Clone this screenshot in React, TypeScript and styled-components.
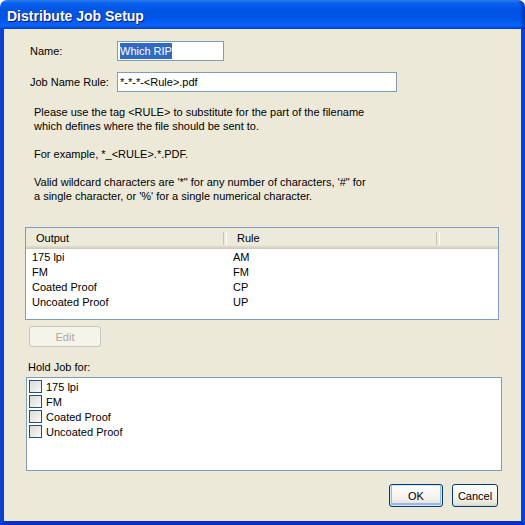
import React from 'react';
import styled, { createGlobalStyle, css } from 'styled-components';

const GlobalStyle = createGlobalStyle`
  html, body {
    margin: 0;
    padding: 0;
    background: #ffffff;
  }
  * {
    box-sizing: border-box;
  }
`;

const Window = styled.div`
  width: 525px;
  height: 525px;
  display: flex;
  flex-direction: column;
  font-family: 'Liberation Sans', Arial, sans-serif;
  font-size: 11px;
  color: #000;
`;

const TitleBar = styled.div`
  height: 29px;
  flex: none;
  display: flex;
  align-items: center;
  padding-left: 7px;
  padding-top: 2px;
  border-radius: 7px 7px 0 0;
  background: linear-gradient(
    to bottom,
    #3d95ff 0%,
    #0a62f0 10%,
    #0054e3 35%,
    #0055e8 65%,
    #0665ff 88%,
    #0049d8 100%
  );
  box-shadow: inset -3px 0 3px rgba(0, 20, 150, 0.5);
`;

const Title = styled.div`
  color: #fff;
  font-family: 'Liberation Sans', Arial, sans-serif;
  font-weight: bold;
  font-size: 14px;
  text-shadow: 1px 1px 0 #0a1883;
`;

const Body = styled.div`
  flex: 1;
  display: flex;
  flex-direction: column;
  background: #ece9d8;
  border-left: 4px solid #0842d4;
  border-right: 4px solid #0842d4;
  border-bottom: 4px solid #0a2fc8;
  padding: 12px 0 0 0;
`;

const FormRow = styled.div<{ $gap?: number }>`
  display: flex;
  align-items: center;
  height: 20px;
  padding-left: 26px;
  margin-bottom: ${(p) => p.$gap ?? 0}px;
`;

const Label = styled.div`
  width: 87px;
`;

const TextInput = styled.div<{ $width: number }>`
  width: ${(p) => p.$width}px;
  height: 20px;
  background: #fff;
  border: 1px solid #7f9db9;
  display: flex;
  align-items: center;
  padding-left: 2px;
  white-space: nowrap;
`;

const Selected = styled.span`
  background: #316ac5;
  color: #fff;
  line-height: 16px;
`;

const HelpText = styled.div`
  padding-left: 30px;
  margin-top: 13px;
  line-height: 14px;
`;

const Para = styled.p`
  margin: 0 0 14px 0;
`;

const ListBox = styled.div<{ $left: number; $width: number; $height: number }>`
  margin-left: ${(p) => p.$left}px;
  width: ${(p) => p.$width}px;
  height: ${(p) => p.$height}px;
  background: #fff;
  border: 1px solid #7f9db9;
  overflow: hidden;
`;

const Header = styled.div`
  display: flex;
  height: 21px;
  background: linear-gradient(to bottom, #ebeadb 0%, #ebeadb 82%, #e2dfcd 86%, #d6d2c2 94%, #cbc7b8 100%);
`;

const HeaderCell = styled.div<{ $width?: number; $last?: boolean }>`
  ${(p) =>
    p.$width
      ? css`
          width: ${p.$width}px;
          flex: none;
        `
      : css`
          flex: 1;
        `}
  display: flex;
  align-items: center;
  padding-left: 10px;
  padding-bottom: 2px;
  position: relative;
  ${(p) =>
    !p.$last &&
    css`
      &::after {
        content: '';
        position: absolute;
        right: 0;
        top: 4px;
        height: 13px;
        width: 2px;
        border-left: 1px solid #c7c5b2;
        border-right: 1px solid #fff;
      }
    `}
`;

const Row = styled.div`
  display: flex;
  height: 15px;
  align-items: center;
`;

const Cell = styled.div<{ $width?: number }>`
  width: ${(p) => (p.$width ? `${p.$width}px` : 'auto')};
  padding-left: 6px;
`;

const Button = styled.button<{ $width: number; $default?: boolean }>`
  width: ${(p) => p.$width}px;
  height: 23px;
  font-family: 'Liberation Sans', Arial, sans-serif;
  font-size: 11px;
  color: #000;
  border: 1px solid #003c74;
  border-radius: 3px;
  background: linear-gradient(to bottom, #ffffff 0%, #f4f3ee 60%, #e6e4d9 90%, #d6d0c5 100%);
  padding: 0;
  ${(p) =>
    p.$default &&
    css`
      box-shadow: inset 0 0 0 1px #cee7ff, inset 0 -1px 0 2px #98b8ea;
    `}

  &:disabled {
    border-color: #c9c7ba;
    background: #f5f4ea;
    color: #aca899;
  }
`;

const EditWrap = styled.div`
  margin: 6px 0 0 25px;
`;

const HoldLabel = styled.div`
  margin: 13px 0 3px 24px;
  line-height: 14px;
`;

const CheckRow = styled.label`
  display: flex;
  align-items: center;
  height: 15px;
  padding-left: 2px;
  gap: 4px;
`;

const CheckBox = styled.span`
  width: 13px;
  height: 13px;
  flex: none;
  border: 1px solid #1c5180;
  background: linear-gradient(135deg, #dcdcd7 0%, #f0f0ea 70%, #ffffff 100%);
`;

const Footer = styled.div`
  display: flex;
  justify-content: flex-end;
  gap: 9px;
  padding-right: 23px;
  margin-top: 13px;
`;

const outputs = [
  { name: '175 lpi', rule: 'AM' },
  { name: 'FM', rule: 'FM' },
  { name: 'Coated Proof', rule: 'CP' },
  { name: 'Uncoated Proof', rule: 'UP' },
];

export default function App() {
  return (
    <Window>
      <GlobalStyle />
      <TitleBar>
        <Title>Distribute Job Setup</Title>
      </TitleBar>
      <Body>
        <FormRow $gap={11}>
          <Label>Name:</Label>
          <TextInput $width={107}>
            <Selected>Which RIP</Selected>
          </TextInput>
        </FormRow>
        <FormRow>
          <Label>Job Name Rule:</Label>
          <TextInput $width={280}>*-*-*-&lt;Rule&gt;.pdf</TextInput>
        </FormRow>
        <HelpText>
          <Para>
            Please use the tag &lt;RULE&gt; to substitute for the part of the filename
            <br />
            which defines where the file should be sent to.
          </Para>
          <Para>For example, *_&lt;RULE&gt;.*.PDF.</Para>
          <Para>
            Valid wildcard characters are '*" for any number of characters, '#" for
            <br />
            a single character, or '%' for a single numerical character.
          </Para>
        </HelpText>
        <ListBox $left={21} $width={474} $height={93} style={{ marginTop: 10 }}>
          <Header>
            <HeaderCell $width={201}>Output</HeaderCell>
            <HeaderCell $width={213}>Rule</HeaderCell>
            <HeaderCell $last />
          </Header>
          {outputs.map((o) => (
            <Row key={o.name}>
              <Cell $width={201}>{o.name}</Cell>
              <Cell>{o.rule}</Cell>
            </Row>
          ))}
        </ListBox>
        <EditWrap>
          <Button $width={72} disabled style={{ height: 21 }}>
            Edit
          </Button>
        </EditWrap>
        <HoldLabel>Hold Job for:</HoldLabel>
        <ListBox $left={22} $width={476} $height={94}>
          <div style={{ height: 1 }} />
          {outputs.map((o) => (
            <CheckRow key={o.name}>
              <CheckBox />
              {o.name}
            </CheckRow>
          ))}
        </ListBox>
        <Footer>
          <Button $width={54} $default>
            OK
          </Button>
          <Button $width={46}>Cancel</Button>
        </Footer>
      </Body>
    </Window>
  );
}
